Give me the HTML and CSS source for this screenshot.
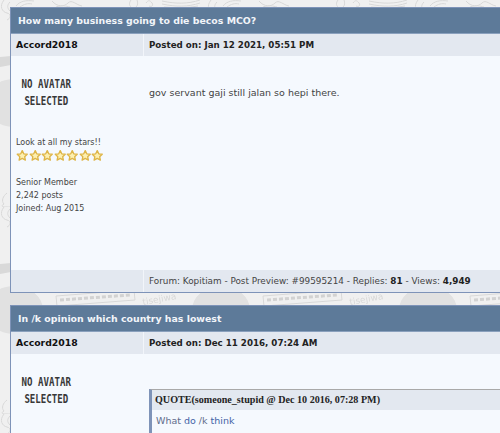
FILE: index.html
```html
<!DOCTYPE html><html lang="en"><head>
  <meta charset="UTF-8">
  <meta name="viewport" content="width=device-width, initial-scale=1.0">
  <title>Posts by Accord2018</title>
  <link rel="stylesheet" href="styles.css">
</head>
<body>
  <!-- wallpaper tile, repeats every 207px -->
  <svg class="wallpaper" width="500" height="433">
    <defs>
      <pattern id="tile" width="207" height="207" patternUnits="userSpaceOnUse">
        <g fill="#e1e1e1">
          <ellipse cx="14" cy="103" rx="29" ry="24"/>
          <ellipse cx="221" cy="103" rx="29" ry="24"/>
          <path d="M0 57l11-1v9l-11 2z" fill="#d9d9d9"/>
        </g>
        <g fill="none" stroke="#d8d8d8">
          <path d="M16 6c4-5 10-6 18-5M20 7c4-3 8-4 12-3M52 1c5 6 12 6 16 2s8 2 14 3M56 7c6-2 10-1 14 0"/>
          <path d="M131 0c-2 3-2 5 0 7M137 0c1 3 1 5-1 7M146 3c2-3 4-3 6 0s-1 4-3 3M162 1c14 3 26 3 38-1M162 4c14 3 26 3 38-1M164 7c12 1 24 1 34-1"/>
          <path d="M7 193c-4 3-6 8-3 11M4 204c-5 3 0 3 6 3M4 0c-5 6-2 12 3 13s3 6 0 7M10 2c-3 3-3 6 0 9"/>
          <path d="M56 89l78-6 1 10-78 6z"/>
          <path d="M60 93l70-5" stroke="#d2d2d2" stroke-width="3" stroke-dasharray="4 2"/>
        </g>
        <text class="wall-word" x="143" y="98" transform="rotate(-10 143 98)">tisejiwa</text>
      </pattern>
    </defs>
    <rect width="500" height="433" fill="url(#tile)"/>
    <symbol id="star" viewBox="0 0 14 14"><path d="M7 1.5l1.7 3.6 3.9.5-2.9 2.7.8 3.9L7 10.3l-3.5 1.9.8-3.9-2.9-2.7 3.9-.5z"/></symbol>
  </svg>

  <div class="post-card">
    <div class="post-title">How many business going to die becos MCO?</div>
    <div class="post-row">
      <div class="side-cell user-name">Accord2018</div>
      <div class="main-cell post-date">Posted on: Jan 12 2021, 05:51 PM</div>
    </div>
    <div class="post-body tall">
      <div class="author">
        <div class="no-avatar"><span>NO AVATAR</span><span>SELECTED</span></div>
        <div class="author-tag">Look at all my stars!!</div>
        <div class="stars">
          <svg class="star"><use href="#star"/></svg>
          <svg class="star"><use href="#star"/></svg>
          <svg class="star"><use href="#star"/></svg>
          <svg class="star"><use href="#star"/></svg>
          <svg class="star"><use href="#star"/></svg>
          <svg class="star"><use href="#star"/></svg>
          <svg class="star"><use href="#star"/></svg>
        </div>
        <div class="author-info">Senior Member<br>2,242 posts<br>Joined: Aug 2015</div>
      </div>
      <div class="post-text">gov servant gaji still jalan so hepi there.</div>
    </div>
    <div class="post-row">
      <div class="side-cell"></div>
      <div class="main-cell post-meta">Forum: Kopitiam - Post Preview: #99595214 - Replies: <b>81</b> - Views: <b>4,949</b></div>
    </div>
  </div>

  <div class="post-card">
    <div class="post-title">In /k opinion which country has lowest</div>
    <div class="post-row">
      <div class="side-cell user-name">Accord2018</div>
      <div class="main-cell post-date">Posted on: Dec 11 2016, 07:24 AM</div>
    </div>
    <div class="post-body">
      <div class="author">
        <div class="no-avatar"><span>NO AVATAR</span><span>SELECTED</span></div>
      </div>
      <div class="post-text quoted">
        <div class="quote">
          <div class="quote-head">QUOTE(someone_stupid @ Dec 10 2016, 07:28 PM)</div>
          <div class="quote-body">What <a href="#">do</a> /k <a href="#">think</a></div>
        </div>
      </div>
    </div>
  </div>
</body></html>
```

FILE: styles.css
```css
html, body {
  height: 100%;
  overflow: hidden;
}
body {
  font-family: "DejaVu Sans", Verdana, sans-serif;
  font-size: 8px;
  background-color: #f0f0f0;
  margin: 0;
  padding: 7px 0 0 10px;
  position: relative;
}
/* doodles behind the cards */
.wallpaper {
  position: absolute;
  left: 0;
  top: 0;
}
.wall-word {
  font-family: "DejaVu Sans", sans-serif;
  font-size: 9px;
  fill: #d8d8d8;
}
.post-card {
  position: relative;
  width: 490px;
  background: #f5f9fe;
  border: 1px solid #7e93b8;
  border-right: 0;
  margin-bottom: 12px;
}
.post-title {
  height: 25px;
  line-height: 26px;
  padding-left: 7px;
  background: #5d7a99;
  border-bottom: 1px solid #8aa0bd;
  color: #f2f5f9;
  font-size: 9.4px;
  font-weight: bold;
}
.post-row {
  display: flex;
  height: 22px;
  line-height: 22px;
  background: #e3e8f0;
}
.side-cell {
  width: 133px;
  box-sizing: border-box;
  padding-left: 5px;
  border-right: 1px solid #f2f5fa;
}
.main-cell {
  flex: 1;
  padding-left: 5px;
  font-size: 8.85px;
  color: #444;
}
.user-name {
  font-size: 9.3px;
  font-weight: bold;
  color: #111;
}
.main-cell.post-date {
  font-size: 8.7px;
  font-weight: bold;
  color: #222;
}
.post-meta b {
  color: #222;
}
.post-body {
  display: flex;
}
.post-body.tall {
  height: 214px;
}
.author {
  width: 133px;
  box-sizing: border-box;
  padding-left: 5px;
  color: #444;
}
.no-avatar {
  display: flex;
  flex-direction: column;
  align-items: center;
  width: 61px;
  margin-top: 19px;
  font-family: "DejaVu Sans Mono", monospace;
  font-size: 13px;
  font-weight: bold;
  line-height: 17px;
  color: #383838;
}
.no-avatar span {
  white-space: nowrap;
  transform: scaleX(0.7);
}
.author-tag {
  margin-top: 27px;
  line-height: 13px;
}
.stars {
  display: flex;
}
.star {
  width: 12.5px;
  height: 13px;
  fill: #fdf0b0;
  stroke: #deb548;
  stroke-width: 1.5;
  stroke-linejoin: round;
}
.author-info {
  margin-top: 14px;
  line-height: 13px;
}
.post-text {
  flex: 1;
  padding: 30px 5px 0;
  font-size: 9.5px;
  line-height: 13px;
  color: #444;
}
.post-text.quoted {
  padding-top: 35px;
  padding-right: 0;
}
.quote {
  border-top: 1px solid #a9a9a9;
  border-left: 3px solid #7e93b8;
  background: #f5f9fe;
}
.quote-head {
  height: 20px;
  line-height: 20px;
  padding-left: 3px;
  background: #e3e8f0;
  font-family: "Liberation Serif", serif;
  font-size: 10.1px;
  font-weight: bold;
  color: #222;
}
.quote-body {
  padding: 4px 4px 10px;
  color: #5f6c8c;
}
.quote-body a {
  color: #4463a6;
  text-decoration: none;
}
```
